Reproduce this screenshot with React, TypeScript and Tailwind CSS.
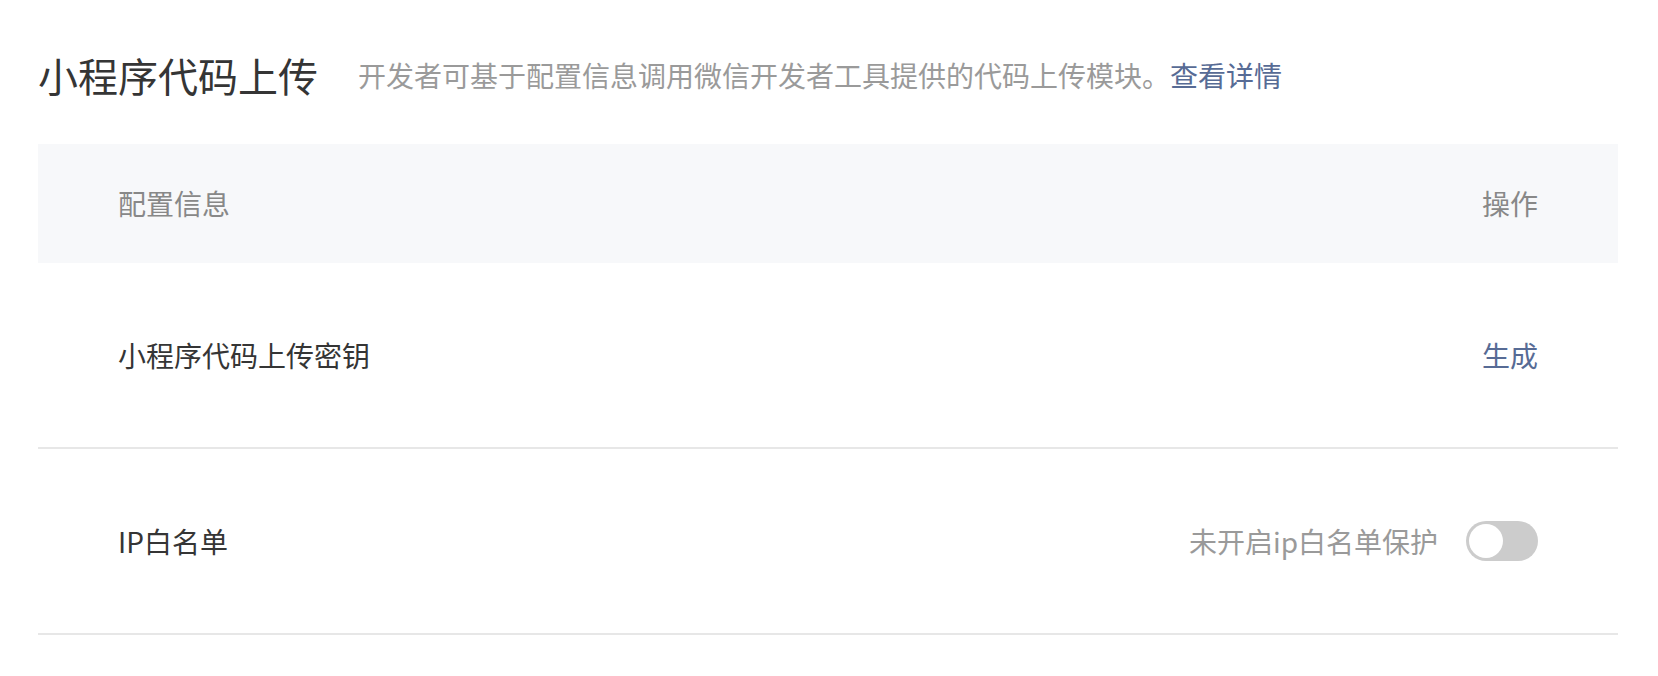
import React from "react";

export default function App() {
  return (
    <div
      className="w-[1658px] h-[676px] bg-white pl-[38px] pr-[40px]"
      style={{ fontFamily: '"Noto Sans CJK SC", "Noto Sans", sans-serif' }}
    >
      <div className="h-[144px] flex items-center pt-[6px]">
        <h1 className="text-[40px] leading-none text-[#353535] font-normal">小程序代码上传</h1>
        <p className="ml-[40px] text-[28px] leading-none text-[#9a9a9a]">
          开发者可基于配置信息调用微信开发者工具提供的代码上传模块。
          <a className="text-[#576b95]">查看详情</a>
        </p>
      </div>
      <div className="w-full">
        <div className="h-[119px] bg-[#f7f8fa] flex items-center justify-between px-[80px] text-[28px] text-[#888888]">
          <span className="-mt-[2px]">配置信息</span>
          <span className="-mt-[2px]">操作</span>
        </div>
        <div className="h-[186px] border-b-2 border-[#e7e7e7] flex items-center justify-between px-[80px] text-[28px]">
          <span className="text-[#353535]">小程序代码上传密钥</span>
          <span className="text-[#576b95]">生成</span>
        </div>
        <div className="h-[186px] border-b-2 border-[#e7e7e7] flex items-center justify-between px-[80px] text-[28px]">
          <span className="text-[#353535]">IP白名单</span>
          <div className="flex items-center">
            <span className="text-[#9a9a9a]">未开启ip白名单保护</span>
            <div className="ml-[28px] w-[72px] h-[40px] rounded-full bg-[#cccccc] flex items-center px-[3px]">
              <div className="w-[34px] h-[34px] rounded-full bg-white"></div>
            </div>
          </div>
        </div>
      </div>
    </div>
  );
}
